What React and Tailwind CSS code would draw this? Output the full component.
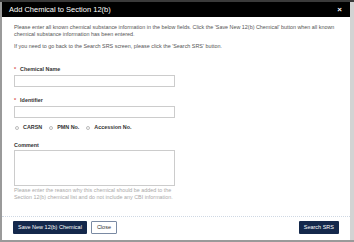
export default function App() {
  return (
    <div className="relative h-[242px] w-[354px] overflow-hidden bg-[#9a9a9a] font-['Liberation_Sans',Arial,sans-serif]">
      <div className="h-[2px] bg-[#3a3a3a]" />
      <div className="flex">
        <div className="ml-[2px] flex w-[348px] flex-col bg-white">
          <div className="flex h-[15px] items-center justify-between bg-black pl-[7px] pr-[8px]">
            <span className="text-[7.5px] leading-none text-white">Add Chemical to Section 12(b)</span>
            <span className="text-[8px] font-bold leading-none text-white">×</span>
          </div>
          <div className="px-[12px] pt-[7px] text-[5.4px] leading-[7px] text-[#555]">
            <p>
              Please enter all known chemical substance information in the below fields. Click the 'Save New 12(b) Chemical' button when all known chemical substance information has been entered.
            </p>
            <p className="mt-[5px]">If you need to go back to the Search SRS screen, please click the 'Search SRS' button.</p>

            <div className="mt-[16px] flex items-center gap-[4px] font-bold text-[#333]">
              <span className="text-[#d9534f]">*</span>
              <span>Chemical Name</span>
            </div>
            <div className="mt-[2px] h-[12px] w-[161px] border border-[#ccc]" />

            <div className="mt-[10px] flex items-center gap-[4px] font-bold text-[#333]">
              <span className="text-[#d9534f]">*</span>
              <span>Identifier</span>
            </div>
            <div className="mt-[2px] h-[12px] w-[161px] border border-[#ccc]" />

            <div className="mt-[6px] flex items-center text-[#333]">
              <span className="ml-[1px] mr-[4px] h-[4px] w-[4px] rounded-full border border-[#bbb]" />
              <span className="font-bold">CARSN</span>
              <span className="ml-[7px] mr-[4px] h-[4px] w-[4px] rounded-full border border-[#bbb]" />
              <span className="font-bold">PMN No.</span>
              <span className="ml-[7px] mr-[4px] h-[4px] w-[4px] rounded-full border border-[#bbb]" />
              <span className="font-bold">Accession No.</span>
            </div>

            <div className="mt-[11px] font-bold text-[#333]">Comment</div>
            <div className="mt-[1px] h-[36px] w-[161px] border border-[#ccc]" />
            <p className="mt-[1px] w-[164px] text-[#aaa]">
              Please enter the reason why this chemical should be added to the Section 12(b) chemical list and do not include any CBI information.
            </p>
          </div>
          <div className="mt-[15px] border-t border-dotted border-[#cfd8e3]" />
          <div className="flex items-center justify-between px-[11px] pb-[6px] pt-[4px]">
            <div className="flex gap-[4px]">
              <div className="flex h-[13px] items-center rounded-[1px] bg-[#14284b] px-[5px] text-[5.5px] text-white">Save New 12(b) Chemical</div>
              <div className="flex h-[13px] items-center rounded-[1px] border border-[#7a8aa3] bg-white px-[5px] text-[5.5px] text-[#333]">Close</div>
            </div>
            <div className="flex h-[13px] items-center rounded-[1px] bg-[#14284b] px-[5px] text-[5.5px] text-white">Search SRS</div>
          </div>
        </div>
        <div className="w-[4px] bg-[#d3d3d3]" />
      </div>
    </div>
  );
}
